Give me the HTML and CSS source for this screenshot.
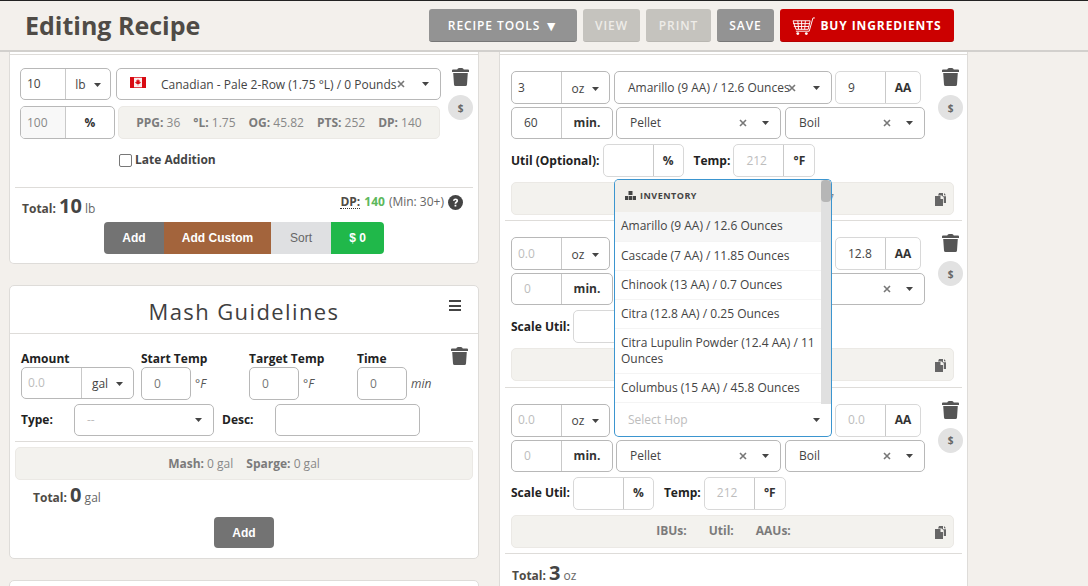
FILE: index.html
```html
<!DOCTYPE html>
<html lang="en">
<head>
<meta charset="utf-8">
<title>Editing Recipe</title>
<link rel="stylesheet" href="styles.css">
</head>
<body>
<svg class="defs" width="0" height="0" aria-hidden="true">
  <symbol id="trash" viewBox="0 0 17 18"><path d="M5.2 1.6Q5.7 0 7 0h3q1.3 0 1.8 1.6H16q1 0 1 1V4H0V2.6q0-1 1-1ZM1.2 5h14.6L15 16.4Q14.900 18 13.400 18H3.600Q2.100 18 2 16.400Z"/></symbol>
  <symbol id="copy" viewBox="0 0 11 13"><path d="M4 0h4v3.200h3V10H8.800V4.500L6.700 2.600H3ZM0 3h5.500v3H8v7H0Z"/><path d="M9 0l2 2.300H9Z"/></symbol>
  <symbol id="caret" viewBox="0 0 7 4"><path d="M0 0h7L3.500 4Z"/></symbol>
  <symbol id="clear" viewBox="0 0 8 8"><path d="M1 1l6 6M7 1L1 7" fill="none" stroke="currentColor" stroke-width="1.600"/></symbol>
</svg>

<header class="topbar">
  <h1 class="page-title">Editing Recipe</h1>
  <nav class="actions">
    <a class="btn btn-tools">Recipe Tools <span class="tri">▼</span></a>
    <a class="btn btn-off btn-view">View</a>
    <a class="btn btn-off btn-print">Print</a>
    <a class="btn btn-save">Save</a>
    <a class="btn btn-buy">
      <svg class="cart" viewBox="0 0 24 19" width="23" height="18"><path d="M1 4h18l-2 9H4ZM1 7h17.500M1.800 10h16M6 4l.8 9M10 4v9M14 4l-.8 9M4 15h14L22 1h2" fill="none" stroke="#fff" stroke-width="1"/><circle cx="6" cy="17.500" r="1.500" fill="#fff"/><circle cx="15" cy="17.500" r="1.500" fill="#fff"/></svg>
      Buy Ingredients
    </a>
  </nav>
</header>

<main class="columns">
  <section class="column column-left">
    <div class="card card-grain">
      <div class="stub"></div>
      <div class="grain-top">
        <div class="grain-fields">
          <div class="row grain-row1">
            <div class="group g-grain-amt"><span class="cell c44 pl">10</span><span class="cell cell-sel c-fill">lb<svg class="caret"><use href="#caret"/></svg></span></div>
            <div class="select s-grain">
              <svg class="flag" viewBox="0 0 16 11"><rect x=".5" y=".5" width="15" height="10" fill="#fbeeee" stroke="#e2474d"/><rect width="4" height="11" fill="#d80a12"/><rect x="12" width="4" height="11" fill="#d80a12"/><path d="M8 2l.8 1.500 1-.3-.3 2 1-.4.300 1L9 7H8.300v1.500h-.6V7H7L5.200 5.800l.3-1 1 .4-.3-2 1 .3Z" fill="#d80a12"/></svg>
              <span class="sel-text">Canadian - Pale 2-Row (1.75 °L) / 0 Pounds</span>
              <svg class="clear clear-tight"><use href="#clear"/></svg>
              <svg class="caret"><use href="#caret"/></svg>
            </div>
          </div>
          <div class="row grain-row2">
            <div class="group g-grain-pct"><span class="cell c44 pl muted-bg ph-dark">100</span><span class="cell cell-unit c-fill">%</span></div>
            <div class="stats s-grain-stats"><span><b>PPG:</b> 36</span><span><b>°L:</b> 1.75</span><span><b>OG:</b> 45.82</span><span><b>PTS:</b> 252</span><span><b>DP:</b> 140</span></div>
          </div>
          <label class="late"><span class="check"></span>Late Addition</label>
        </div>
        <div class="side">
          <svg class="trash"><use href="#trash"/></svg>
          <span class="dollar">$</span>
        </div>
      </div>
      <div class="totals-row">
        <p class="total"><b>Total:</b> <strong>10</strong> <span>lb</span></p>
        <p class="dp"><abbr>DP:</abbr><b>140</b><span>(Min: 30+)</span>
          <svg class="help" viewBox="0 0 16 16" width="16" height="16"><circle cx="8" cy="8" r="8" fill="#444"/><path d="M5.300 6.200Q5.500 3.700 8.100 3.700q2.700 0 2.700 2.300c0 1.900-2 1.800-2 3.400H7c0-2.400 2-2.400 2-3.400 0-.5-.4-.8-1-.8-.7 0-1 .4-1.200 1.100ZM7 10.400h1.900v1.900H7Z" fill="#fff"/></svg>
        </p>
      </div>
      <div class="btn-row">
        <a class="sq sq-add">Add</a><a class="sq sq-custom">Add Custom</a><a class="sq sq-sort">Sort</a><a class="sq sq-cost">$ 0</a>
      </div>
    </div>

    <div class="card card-mash">
      <div class="card-head">
        <h2>Mash Guidelines</h2>
        <span class="burger"></span>
      </div>
      <div class="mash-body">
        <div class="mash-top">
          <div class="mash-col mc1"><label>Amount</label>
            <div class="group g-gal"><span class="cell c59 ph">0.0</span><span class="cell cell-sel c-fill">gal<svg class="caret"><use href="#caret"/></svg></span></div>
          </div>
          <div class="mash-col mc2"><label>Start Temp</label>
            <div class="with-unit"><span class="box">0</span><i>°F</i></div>
          </div>
          <div class="mash-col mc2"><label>Target Temp</label>
            <div class="with-unit"><span class="box">0</span><i>°F</i></div>
          </div>
          <div class="mash-col mc4"><label>Time</label>
            <div class="with-unit"><span class="box">0</span><i>min</i></div>
          </div>
          <svg class="trash"><use href="#trash"/></svg>
        </div>
        <div class="mash-type">
          <label class="lab-type">Type:</label>
          <div class="select s-type"><span class="sel-text ph">--</span><svg class="caret"><use href="#caret"/></svg></div>
          <label class="lab-desc">Desc:</label>
          <span class="box box-desc"></span>
        </div>
        <div class="stats s-mash"><span><b>Mash:</b> 0 gal</span><span><b>Sparge:</b> 0 gal</span></div>
        <p class="total total-mash"><b>Total:</b> <strong>0</strong> <span>gal</span></p>
        <div class="btn-row btn-row-mash"><a class="sq sq-add sq-solo">Add</a></div>
      </div>
    </div>
    <div class="card card-next"></div>
  </section>

  <section class="column column-right">
    <div class="card card-hops">
      <div class="stub"></div>

      <article class="hop">
        <div class="hop-top">
          <div class="hop-fields">
            <div class="row">
              <div class="group g-amt"><span class="cell c49 pl">3</span><span class="cell cell-sel c-fill">oz<svg class="caret"><use href="#caret"/></svg></span></div>
              <div class="select s-hop"><span class="sel-text">Amarillo (9 AA) / 12.6 Ounces</span><svg class="clear clear-tight"><use href="#clear"/></svg><svg class="caret"><use href="#caret"/></svg></div>
              <div class="group g-aa light"><span class="cell c49 val">9</span><span class="cell cell-unit c-fill">AA</span></div>
            </div>
            <div class="row row-mid">
              <div class="group g-min"><span class="cell c49 val">60</span><span class="cell cell-unit c-fill">min.</span></div>
              <div class="select s-form"><span class="sel-text">Pellet</span><svg class="clear"><use href="#clear"/></svg><svg class="caret"><use href="#caret"/></svg></div>
              <div class="select s-use"><span class="sel-text">Boil</span><svg class="clear"><use href="#clear"/></svg><svg class="caret"><use href="#caret"/></svg></div>
            </div>
            <div class="row row-util">
              <label>Util (Optional):</label>
              <div class="group light g-pct"><span class="cell c49"></span><span class="cell cell-unit c-fill">%</span></div>
              <label class="lab-temp">Temp:</label>
              <div class="group light g-temp"><span class="cell c49 val ph">212</span><span class="cell cell-unit c-fill">°F</span></div>
            </div>
          </div>
          <div class="side side-hop">
            <svg class="trash"><use href="#trash"/></svg>
            <span class="dollar">$</span>
          </div>
        </div>
        <div class="stats s-hop-stats s-hop-first"><span><b>IBUs:</b> 34.2</span><span><b>Util:</b> 18.9%</span><span><b>AAUs:</b> 27</span><svg class="copy"><use href="#copy"/></svg></div>
      </article>

      <article class="hop">
        <div class="hop-top">
          <div class="hop-fields">
            <div class="row">
              <div class="group g-amt"><span class="cell c49 pl ph">0.0</span><span class="cell cell-sel c-fill">oz<svg class="caret"><use href="#caret"/></svg></span></div>
              <div class="select s-hop"><span class="sel-text">Citra (12.8 AA) / 0.25 Ounces</span><svg class="clear clear-tight"><use href="#clear"/></svg><svg class="caret"><use href="#caret"/></svg></div>
              <div class="group g-aa light"><span class="cell c49 val">12.8</span><span class="cell cell-unit c-fill">AA</span></div>
            </div>
            <div class="row row-mid">
              <div class="group g-min"><span class="cell c49 val ph">0</span><span class="cell cell-unit c-fill">min.</span></div>
              <div class="select s-form"><span class="sel-text">Pellet</span><svg class="clear"><use href="#clear"/></svg><svg class="caret"><use href="#caret"/></svg></div>
              <div class="select s-use"><span class="sel-text">Boil</span><svg class="clear"><use href="#clear"/></svg><svg class="caret"><use href="#caret"/></svg></div>
            </div>
            <div class="row row-util">
              <label>Scale Util:</label>
              <div class="group light g-pct"><span class="cell c49"></span><span class="cell cell-unit c-fill">%</span></div>
              <label class="lab-temp">Temp:</label>
              <div class="group light g-temp"><span class="cell c49 val ph">212</span><span class="cell cell-unit c-fill">°F</span></div>
            </div>
          </div>
          <div class="side side-hop">
            <svg class="trash"><use href="#trash"/></svg>
            <span class="dollar">$</span>
          </div>
        </div>
        <div class="stats s-hop-stats"><span><b>IBUs:</b></span><span><b>Util:</b></span><span><b>AAUs:</b></span><svg class="copy"><use href="#copy"/></svg></div>
      </article>

      <article class="hop">
        <div class="hop-top">
          <div class="hop-fields">
            <div class="row">
              <div class="group g-amt"><span class="cell c49 pl ph">0.0</span><span class="cell cell-sel c-fill">oz<svg class="caret"><use href="#caret"/></svg></span></div>
              <div class="select s-hop s-open">
                <div class="menu">
                  <div class="menu-list">
                    <div class="menu-head">
                      <svg class="cubes" viewBox="0 0 11 9" width="11" height="9"><path d="M3.500 0h4v4h-4ZM0 5h3.300v4H0ZM3.900 5h3.200v4H3.900ZM7.700 5H11v4H7.700Z" fill="#444"/></svg>
                      Inventory
                    </div>
                    <div class="menu-item is-active">Amarillo (9 AA) / 12.6 Ounces</div>
                    <div class="menu-item">Cascade (7 AA) / 11.85 Ounces</div>
                    <div class="menu-item">Chinook (13 AA) / 0.7 Ounces</div>
                    <div class="menu-item">Citra (12.8 AA) / 0.25 Ounces</div>
                    <div class="menu-item menu-item-2">Citra Lupulin Powder (12.4 AA) / 11 Ounces</div>
                    <div class="menu-item">Columbus (15 AA) / 45.8 Ounces</div>
                  </div>
                  <div class="scroll"><span class="thumb"></span></div>
                </div>
                <span class="sel-text ph">Select Hop</span><svg class="caret"><use href="#caret"/></svg>
              </div>
              <div class="group g-aa light"><span class="cell c49 val ph">0.0</span><span class="cell cell-unit c-fill">AA</span></div>
            </div>
            <div class="row row-mid">
              <div class="group g-min"><span class="cell c49 val ph">0</span><span class="cell cell-unit c-fill">min.</span></div>
              <div class="select s-form"><span class="sel-text">Pellet</span><svg class="clear"><use href="#clear"/></svg><svg class="caret"><use href="#caret"/></svg></div>
              <div class="select s-use"><span class="sel-text">Boil</span><svg class="clear"><use href="#clear"/></svg><svg class="caret"><use href="#caret"/></svg></div>
            </div>
            <div class="row row-util">
              <label>Scale Util:</label>
              <div class="group light g-pct"><span class="cell c49"></span><span class="cell cell-unit c-fill">%</span></div>
              <label class="lab-temp">Temp:</label>
              <div class="group light g-temp"><span class="cell c49 val ph">212</span><span class="cell cell-unit c-fill">°F</span></div>
            </div>
          </div>
          <div class="side side-hop">
            <svg class="trash"><use href="#trash"/></svg>
            <span class="dollar">$</span>
          </div>
        </div>
        <div class="stats s-hop-stats"><span><b>IBUs:</b></span><span><b>Util:</b></span><span><b>AAUs:</b></span><svg class="copy"><use href="#copy"/></svg></div>
      </article>

      <p class="total total-hops"><b>Total:</b> <strong>3</strong> <span>oz</span></p>
    </div>
  </section>
</main>
</body>
</html>
```

FILE: styles.css
```css
* { box-sizing: border-box; }
html { height: 586px; overflow: hidden; }
body {
  margin: 0;
  height: 586px;
  overflow: hidden;
  background: #f3f0ec;
  border-top: 1px solid #222;
  font: 12px/16px "Open Sans", sans-serif;
  color: #444;
}
.defs { position: absolute; }
p, h1, h2 { margin: 0; }
svg { display: block; flex: none; }

/* top bar */
.topbar {
  display: flex;
  justify-content: space-between;
  align-items: flex-start;
  height: 51px;
  padding: 8px 134px 0 25px;
  border-bottom: 2px solid #d2d0cd;
}
.page-title {
  font-size: 25px;
  line-height: 32px;
  font-weight: 700;
  color: #4f4b46;
}
.actions { display: flex; gap: 6px; }
.btn {
  display: flex;
  align-items: center;
  justify-content: center;
  height: 33px;
  padding-top: 1px;
  border-radius: 3px;
  color: #fff;
  font-weight: 600;
  font-size: 12px;
  letter-spacing: .9px;
  text-transform: uppercase;
  background: #939393;
  border-bottom: 1px solid #777;
}
.tri { margin-left: 4px; font-size: 14px; letter-spacing: 0; }
.btn-tools { width: 148px; }
.btn-off { background: #c5c3be; color: #eeece8; border-bottom-color: #b9b7b2; }
.btn-view { width: 57px; }
.btn-print { width: 65px; }
.btn-save { width: 57px; }
.btn-buy { width: 174px; background: #cc0000; border-bottom-color: #b50000; gap: 5px; font-weight: 700; }

/* columns */
.columns {
  display: flex;
  gap: 20px;
  height: 534px;
  overflow: hidden;
  padding-left: 9px;
}
.column { display: flex; flex-direction: column; }
.column-left { width: 470px; gap: 21px; }
.column-right { width: 469px; }
.card {
  flex: none;
  background: #fff;
  border: 1px solid #dedcd9;
  border-top: 0;
  border-radius: 0 0 5px 5px;
}
.stub { height: 3px; border-bottom: 1px solid #dedcd9; }

/* shared controls */
.row { display: flex; }
.group {
  display: flex;
  height: 33px;
  border: 1px solid #b8b8b8;
  border-radius: 5px;
  overflow: hidden;
  background: #fff;
  color: #444;
}
.group.light { border-color: #d8d8d8; }
.cell { display: flex; align-items: center; height: 100%; }
.c44 { width: 44px; }
.c49 { width: 49px; }
.c59 { width: 59px; padding-left: 6px; }
.c-fill { flex: 1; }
.pl { padding-left: 6px; }
.val { padding-left: 12px; }
.ph { color: #bdbdbd; }
.ph-dark { color: #888; }
.muted-bg { background: #f8f8f8; }
.group .cell + .cell { border-left: 1px solid #c9c9c9; }
.cell-sel { justify-content: center; gap: 8px; padding-top: 2px; }
.cell-unit { justify-content: center; font-weight: 700; color: #333; }
.caret { width: 7px; height: 4px; fill: #444; }
.select {
  display: flex;
  align-items: center;
  height: 33px;
  padding: 0 11px 0 13px;
  border: 1px solid #b8b8b8;
  border-radius: 5px;
  background: #fff;
}
.sel-text { flex: 1; min-width: 0; white-space: nowrap; color: #444; }
.sel-text.ph { color: #bdbdbd; }
.clear { width: 8px; height: 8px; color: #777; margin-right: 15px; }
.clear-tight { margin: 0 17px 0 -5px; }
.stats {
  display: flex;
  align-items: center;
  justify-content: center;
  height: 33px;
  border: 1px solid #ebe9e5;
  border-radius: 5px;
  background: #f3f2ee;
  color: #888;
  gap: 13px;
}
.stats b { color: #7b7b7b; font-weight: 700; }
.side { display: flex; flex-direction: column; align-items: center; width: 25px; }
.trash { width: 17px; height: 18px; fill: #555; }
.dollar {
  display: flex;
  align-items: center;
  justify-content: center;
  width: 25px;
  height: 25px;
  margin-top: 9px;
  border-radius: 50%;
  background: #e2e2e2;
  color: #666;
  font-size: 10px;
  font-weight: 700;
}
.total b { font-weight: 700; color: #4f4b46; }
.total strong { font-size: 20px; font-weight: 700; color: #444; }
.total span { color: #666; }

/* grain card */
.card-grain { height: 212px; }
.grain-top { display: flex; padding: 13px 5px 0 10px; }
.grain-fields { width: 421px; margin-right: 7px; }
.grain-row1 { gap: 5px; }
.grain-row1 .group { height: 32px; }
.grain-row1 .select { height: 32px; }
.grain-row1 .sel-text { padding-top: 1px; }
.g-grain-amt { width: 91px; }
.s-grain { width: 325px; }
.flag { width: 16px; height: 11px; margin-right: 15px; margin-top: -3px; }
.grain-row2 { margin-top: 6px; gap: 3px; }
.g-grain-pct { width: 95px; }
.s-grain-stats { width: 322px; }
.late {
  display: flex;
  align-items: center;
  gap: 3px;
  margin: 13px 0 0 99px;
  font-weight: 700;
}
.check { width: 13px; height: 13px; border: 1px solid #777; border-radius: 2px; background: #fff; }
.totals-row {
  display: flex;
  justify-content: space-between;
  height: 35px;
  margin: 19px 5px 0;
  padding: 7px 10px 0 7px;
  border-top: 1px solid #dedcd9;
}
.total { padding-top: 3px; }
.dp { display: flex; align-items: center; gap: 4px; height: 16px; margin-top: -1px; color: #666; white-space: nowrap; }
.dp abbr { font-weight: 700; color: #4f4b46; border-bottom: 1px dotted #333; line-height: 13px; }
.dp b { color: #5cb85c; }
.help { width: 15px; height: 15px; }
.btn-row { display: flex; justify-content: center; }
.sq {
  display: flex;
  align-items: center;
  justify-content: center;
  height: 32px;
  font: 700 12px/16px "Liberation Sans", sans-serif;
  color: #fff;
}
.sq-add { width: 60px; background: #737373; border-radius: 4px 0 0 4px; }
.sq-custom { width: 107px; background: #a3643c; }
.sq-sort { width: 60px; background: #dfe0e2; color: #666; font-weight: 400; }
.sq-cost { width: 53px; background: #20b84a; border-radius: 0 4px 4px 0; }
.sq-solo { border-radius: 4px; height: 31px; }

/* mash card */
.card-mash { height: 274px; border-top: 1px solid #dedcd9; border-radius: 5px; }
.card-head {
  position: relative;
  height: 48px;
  border-bottom: 1px solid #dedcd9;
  text-align: center;
}
.card-head h2 {
  font-size: 22px;
  line-height: 50px;
  font-weight: 400;
  letter-spacing: 1.4px;
  color: #3f3f3f;
}
.burger {
  position: absolute;
  top: 14px;
  right: 17px;
  width: 12px;
  height: 11px;
  border-top: 2px solid #444;
  border-bottom: 2px solid #444;
}
.burger::after {
  content: "";
  display: block;
  height: 2px;
  margin-top: 2.500px;
  background: #444;
}
.mash-body { padding: 13px 5px 0; }
.mash-top { display: flex; padding: 0 5px 0 6px; }
.mash-top .trash { margin-left: auto; }
.mash-col label { display: block; padding-top: 4px; font-weight: 700; color: #222; }
.mc1 { width: 120px; }
.mc2 { width: 108px; }
.mc4 { width: 80px; }
.g-gal { width: 113px; height: 32px; }
.with-unit { display: flex; align-items: center; gap: 4px; }
.with-unit i { color: #555; font-size: 12px; }
.box {
  display: flex;
  align-items: center;
  width: 50px;
  height: 33px;
  padding-left: 12px;
  border: 1px solid #b8b8b8;
  border-radius: 5px;
  color: #777;
}
.mash-type { display: flex; align-items: center; margin-top: 4px; padding: 0 0 5px 6px; border-bottom: 1px solid #dedcd9; }
.mash-type label { width: 53px; font-weight: 700; color: #222; }
.s-type { width: 140px; height: 32px; padding-left: 12px; margin-right: 8px; }
.box-desc { width: 145px; height: 32px; }
.s-mash { margin-top: 5px; }
.total-mash { margin: 7px 0 0 18px; padding: 0; }
.btn-row-mash { margin-top: 11px; }
.card-next { height: 40px; border-top: 1px solid #dedcd9; border-radius: 5px; }

/* hops */
.card-hops { height: 560px; }
.hop {
  height: 166.5px;
  margin: 0 5px;
  padding: 16px 8px 0 6px;
  border-bottom: 1px solid #dedcd9;
}
.hop:first-of-type { height: 166px; }
.hop-top { display: flex; height: 111px; }
.hop-fields { flex: 1; display: flex; flex-direction: column; gap: 3px; }
.hop-fields .row { gap: 3px; }
.row-mid .group, .row-mid .select { height: 32px; }
.side-hop { margin: -3px -9px 0 0; }
.g-amt { width: 99px; }
.g-amt + .select { margin-left: 1px; }
.s-hop { width: 218px; }
.g-aa { width: 86px; }
.g-min { width: 102px; }
.s-form { width: 165px; }
.s-use { width: 140px; margin-left: 1px; }
.hop-fields .row-util { align-items: center; gap: 0; margin-top: 2px; }
.row-util label { font-weight: 700; color: #222; margin-right: 3px; white-space: nowrap; }
.g-pct { width: 81px; }
.g-temp { width: 82px; }
.row-util .lab-temp { margin-left: 10px; margin-right: 3px; }
.s-hop-stats { position: relative; gap: 22px; padding-right: 18px; }
.s-hop-first { padding-right: 12px; }
.copy { position: absolute; right: 7px; top: 10px; width: 11px; height: 13px; fill: #666; }
.total-hops { margin: 11px 0 0 12px; padding: 0; }

/* open hop menu */
.s-open { position: relative; border-color: #3b95cf; border-top: 0; border-radius: 0 0 5px 5px; }
.menu {
  position: absolute;
  left: -1px;
  right: -1px;
  bottom: 32px;
  height: 225px;
  background: #fff;
  border: 1px solid #3b95cf;
  border-bottom: 0;
  border-radius: 5px 5px 0 0;
  overflow: hidden;
  z-index: 5;
}
.menu-list { margin-right: 10px; }
.menu-head {
  display: flex;
  align-items: center;
  gap: 4px;
  height: 32px;
  padding-left: 10px;
  background: #f0eeea;
  color: #444;
  font-size: 9px;
  font-weight: 700;
  letter-spacing: .5px;
  text-transform: uppercase;
}
.menu-item {
  display: flex;
  align-items: center;
  height: 29px;
  padding: 0 6px;
  border-bottom: 1px solid #f4f4f4;
  color: #444;
}
.menu-item-2 { height: 45px; }
.is-active { background: #f6f6f6; height: 30px; }
.scroll {
  position: absolute;
  top: 0;
  right: 0;
  bottom: 0;
  width: 10px;
  background: #e0e0e0;
}
.thumb { display: block; width: 100%; height: 22px; border-radius: 4px; background: #b6b6b6; }
```
